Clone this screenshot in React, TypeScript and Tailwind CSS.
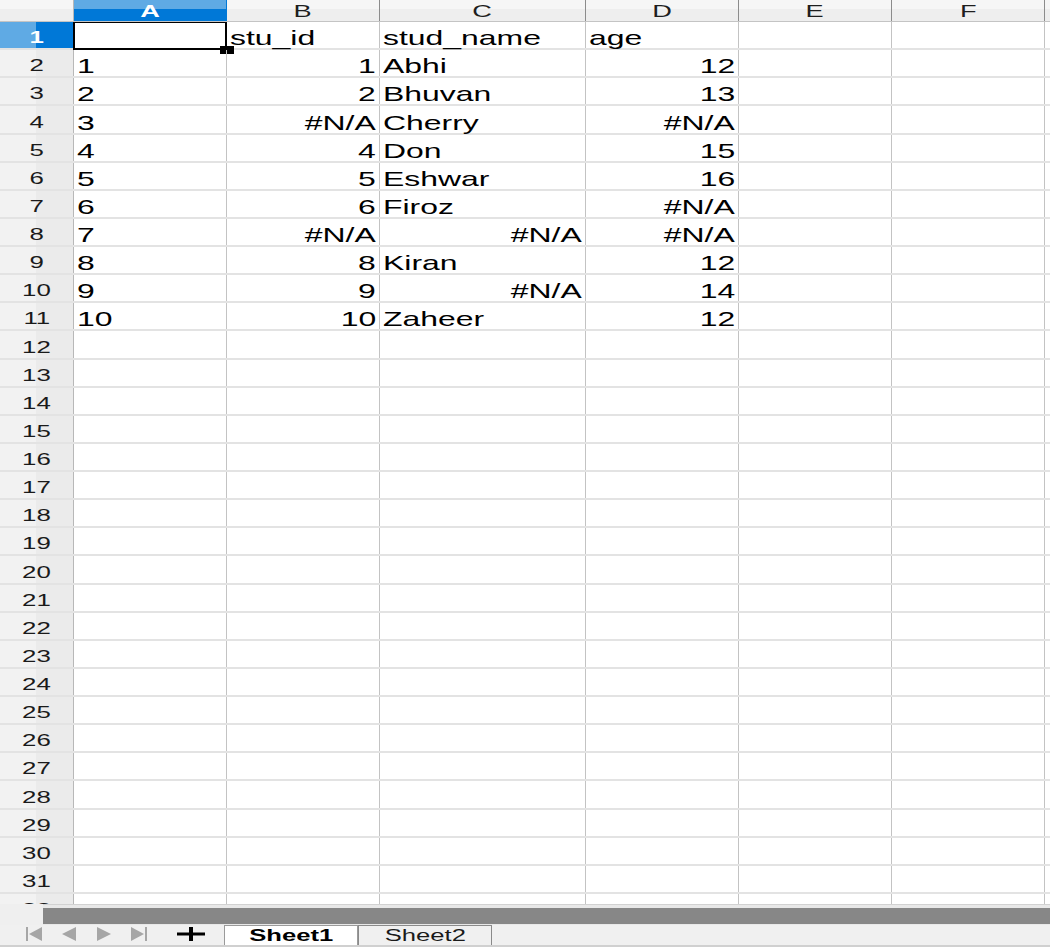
import React from "react"

type Align = "left" | "right"

interface Cell {
  v: string
  a?: Align
}

const columns = [
  { label: "A", w: "w-[153px]" },
  { label: "B", w: "w-[153px]" },
  { label: "C", w: "w-[206px]" },
  { label: "D", w: "w-[153px]" },
  { label: "E", w: "w-[153px]" },
  { label: "F", w: "w-[153px]" },
]

const L = (v: string): Cell => ({ v, a: "left" })
const R = (v: string): Cell => ({ v, a: "right" })

const data: Cell[][] = [
  [L(""), L("stu_id"), L("stud_name"), L("age")],
  [L("1"), R("1"), L("Abhi"), R("12")],
  [L("2"), R("2"), L("Bhuvan"), R("13")],
  [L("3"), R("#N/A"), L("Cherry"), R("#N/A")],
  [L("4"), R("4"), L("Don"), R("15")],
  [L("5"), R("5"), L("Eshwar"), R("16")],
  [L("6"), R("6"), L("Firoz"), R("#N/A")],
  [L("7"), R("#N/A"), R("#N/A"), R("#N/A")],
  [L("8"), R("8"), L("Kiran"), R("12")],
  [L("9"), R("9"), R("#N/A"), R("14")],
  [L("10"), R("10"), L("Zaheer"), R("12")],
]

// the screenshot's text is stretched sideways, so widen glyphs
function Wide({ children, origin, narrow }: { children: React.ReactNode; origin: "left" | "right" | "center"; narrow?: boolean }) {
  const o = origin === "right" ? "origin-right" : origin === "center" ? "origin-center" : "origin-left"
  const s = narrow ? "scale-x-[1.52]" : "scale-x-[1.6]"
  return <span className={`inline-block whitespace-pre ${s} ${o}`}>{children}</span>
}

function NavIcon({ kind }: { kind: "first" | "prev" | "next" | "last" }) {
  return (
    <svg width="16" height="14" viewBox="0 0 16 14" className="shrink-0">
      {kind === "first" && (
        <>
          <rect x="0" y="0" width="2" height="14" fill="#a6a6a6" />
          <polygon points="16,0 3,7 16,14" fill="#a6a6a6" />
        </>
      )}
      {kind === "prev" && <polygon points="15,0 1,7 15,14" fill="#a6a6a6" />}
      {kind === "next" && <polygon points="1,0 15,7 1,14" fill="#a6a6a6" />}
      {kind === "last" && (
        <>
          <polygon points="0,0 13,7 0,14" fill="#a6a6a6" />
          <rect x="14" y="0" width="2" height="14" fill="#a6a6a6" />
        </>
      )}
    </svg>
  )
}

export default function App() {
  const rows = Array.from({ length: 32 }, (_, i) => i + 1)

  return (
    <div className="w-[1050px] h-[950px] bg-white overflow-hidden flex flex-col font-['Liberation_Sans',Arial,sans-serif] text-black">
      {/* column headers */}
      <div className="flex h-[22px] shrink-0 border-b border-[#c4c4c4]">
        <div className="w-[74px] border-r border-[#b8b8b8] bg-[linear-gradient(to_bottom,#f6f6f6_45%,#eeeeee_45%)]" />
        {columns.map((c) => {
          const sel = c.label === "A"
          return (
            <div
              key={c.label}
              className={`${c.w} flex justify-center pt-[3px] text-[17px] leading-none border-r ${
                sel
                  ? "bg-[linear-gradient(to_bottom,#5faae4_45%,#0078d7_45%)] text-white font-bold border-[#0078d7]"
                  : "bg-[linear-gradient(to_bottom,#f6f6f6_45%,#eeeeee_45%)] text-[#1e1e1e] border-[#8c8c8c]"
              }`}
            >
              <Wide origin="center">{c.label}</Wide>
            </div>
          )
        })}
        <div className="flex-1 bg-[linear-gradient(to_bottom,#f6f6f6_45%,#eeeeee_45%)]" />
      </div>

      {/* grid */}
      <div className="h-[882px] shrink-0 overflow-hidden">
        {rows.map((r) => {
          const line = data[r - 1]
          const sel = r === 1
          return (
            <div key={r} className="flex h-[28.13px] border-b-2 border-[#e3e3e3]">
              <div
                className={`w-[74px] border-r border-[#b8b8b8] flex items-end justify-center pb-[2px] text-[17px] leading-none ${
                  sel
                    ? "bg-[linear-gradient(to_right,#5faae4_50%,#0078d7_50%)] text-white font-bold"
                    : "bg-[linear-gradient(to_right,#f2f2f2_50%,#ebebeb_50%)] text-[#1a1a1a]"
                }`}
              >
                <Wide origin="center" narrow>{String(r)}</Wide>
              </div>
              {columns.map((c, ci) => {
                const cell = line ? line[ci] : undefined
                const right = cell?.a === "right"
                return (
                  <div
                    key={c.label}
                    className={`${c.w} relative flex items-end px-[3px] border-r border-[#c3c3c3] text-[21px] leading-[21px] ${
                      right ? "justify-end" : "justify-start"
                    }`}
                  >
                    {cell && cell.v !== "" && (
                      <Wide origin={right ? "right" : "left"} narrow>
                        {cell.v}
                      </Wide>
                    )}
                    {sel && ci === 0 && (
                      <>
                        <div className="absolute -left-[1px] -top-[1px] -right-[1px] -bottom-[2px] border-2 border-black" />
                        <div className="absolute -right-[8px] -bottom-[6px] w-[14px] h-[8px] bg-black" />
                      </>
                    )}
                  </div>
                )
              })}
              <div className="flex-1" />
            </div>
          )
        })}
      </div>

      {/* horizontal scrollbar */}
      <div className="flex h-[21px] shrink-0 bg-[#efefef]">
        <div className="w-[43px]" />
        <div className="flex-1 border-t border-[#d2d2d2] bg-[#e8e8e8] pt-[3px]">
          <div className="h-[16px] bg-[#878787]" />
        </div>
      </div>

      {/* sheet tabs */}
      <div className="flex items-end h-[22px] shrink-0 bg-[#f0f0f0] border-b-2 border-[#d0d0d0]">
        <div className="flex items-center gap-[19px] pl-[26px] h-[22px]">
          <NavIcon kind="first" />
          <NavIcon kind="prev" />
          <NavIcon kind="next" />
          <NavIcon kind="last" />
        </div>
        <div className="flex items-center h-[22px] ml-[30px]">
          <svg width="28" height="14" viewBox="0 0 28 14">
            <rect x="0" y="5.5" width="28" height="3" fill="#000" />
            <rect x="12" y="0" width="4" height="14" fill="#000" />
          </svg>
        </div>
        <div className="ml-[19px] w-[134px] h-[20px] bg-white border border-b-0 border-[#9a9a9a] flex items-center justify-center text-[16px] leading-none font-bold">
          <Wide origin="center">Sheet1</Wide>
        </div>
        <div className="w-[134px] h-[20px] bg-[#f0f0f0] border border-b-0 border-[#8a8a8a] flex items-center justify-center text-[16px] leading-none text-[#1a1a1a]">
          <Wide origin="center">Sheet2</Wide>
        </div>
      </div>
    </div>
  )
}
